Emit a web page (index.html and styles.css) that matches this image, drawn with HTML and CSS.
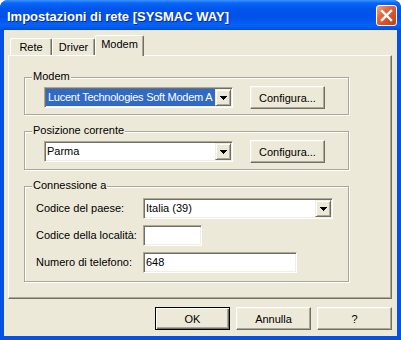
FILE: index.html
```html
<!DOCTYPE html>
<html lang="it">

<head>
  <meta charset="UTF-8">
  <meta name="viewport" content="width=device-width, initial-scale=1.0">
  <title>Impostazioni di rete</title>
  <link rel="stylesheet" href="styles.css">
</head>

<body>
  <div class="window">
    <div class="titlebar">
      <span class="title">Impostazioni di rete [SYSMAC WAY]</span>
      <button type="button" class="close">
        <svg width="19" height="19" viewBox="0 0 19 19">
          <path d="M5 5 L14 14 M14 5 L5 14" stroke="#fff" stroke-width="2.4" stroke-linecap="square" fill="none" />
        </svg>
      </button>
    </div>

    <div class="client">
      <div class="tabs">
        <div class="tab tab-rete">Rete</div>
        <div class="tab tab-driver">Driver</div>
        <div class="tab tab-modem active">Modem</div>
      </div>

      <div class="panel">
        <div class="group group-modem">
          <span class="legend">Modem</span>
          <div class="row">
            <div class="combo combo-wide">
              <span class="value"><span class="sel">Lucent Technologies Soft Modem A</span></span>
              <span class="drop"><svg width="7" height="4" viewBox="0 0 7 4"><path d="M0 0h7v1h-1v1h-1v1h-1v1h-1v-1h-1v-1h-1v-1h-1z" /></svg></span>
            </div>
            <button type="button" class="btn">Configura...</button>
          </div>
        </div>

        <div class="group group-pos">
          <span class="legend">Posizione corrente</span>
          <div class="row">
            <div class="combo combo-wide">
              <span class="value">Parma</span>
              <span class="drop"><svg width="7" height="4" viewBox="0 0 7 4"><path d="M0 0h7v1h-1v1h-1v1h-1v1h-1v-1h-1v-1h-1v-1h-1z" /></svg></span>
            </div>
            <button type="button" class="btn">Configura...</button>
          </div>
        </div>

        <div class="group group-conn">
          <span class="legend">Connessione a</span>
          <div class="form">
            <label>Codice del paese:</label>
            <div class="combo combo-country">
              <span class="value">Italia (39)</span>
              <span class="drop"><svg width="7" height="4" viewBox="0 0 7 4"><path d="M0 0h7v1h-1v1h-1v1h-1v1h-1v-1h-1v-1h-1v-1h-1z" /></svg></span>
            </div>
            <label>Codice della località:</label>
            <div class="edit edit-area"></div>
            <label>Numero di telefono:</label>
            <div class="edit edit-phone">648</div>
          </div>
        </div>
      </div>

      <div class="actions">
        <button type="button" class="btn default">OK</button>
        <button type="button" class="btn">Annulla</button>
        <button type="button" class="btn btn-help">?</button>
      </div>
    </div>
  </div>
</body>

</html>
```

FILE: styles.css
```css
body {
  margin: 0;
  background: #fff;
}

.window {
  width: 401px;
  height: 340px;
  display: flex;
  flex-direction: column;
  background: #0550e6;
  border-radius: 8px 8px 0 0;
  overflow: hidden;
  font-family: "Liberation Sans", Arial, sans-serif;
  font-size: 11px;
  color: #000;
}

.titlebar {
  height: 30px;
  box-sizing: border-box;
  display: flex;
  align-items: center;
  padding: 3px 0 0 7px;
  background: linear-gradient(#3d95ff 0, #0a66f7 3px, #0055ea 9px, #0051ea 18px, #0563f5 25px, #0058ee 28px, #0a45d3 30px);
}

.title {
  flex: 1;
  color: #fff;
  font-size: 13px;
  font-weight: bold;
  line-height: 15px;
  text-shadow: 1px 1px #0b2a9a;
}

.close {
  align-self: flex-start;
  margin: 2px 4px 0 0;
  width: 21px;
  height: 21px;
  padding: 0;
  border: 1px solid #fff;
  border-radius: 3px;
  background: linear-gradient(135deg, #f0a58c 0%, #e2683f 35%, #d24d26 70%, #c2421c 100%);
  display: flex;
  align-items: center;
  justify-content: center;
}

.client {
  flex: 1;
  margin: 0 4px 4px;
  padding-top: 5px;
  background: #ece9d8;
  display: flex;
  flex-direction: column;
}

.tabs {
  height: 20px;
  display: flex;
  align-items: flex-end;
  margin-left: 6px;
}

.tab {
  position: relative;
  height: 17px;
  box-sizing: border-box;
  padding-top: 2px;
  line-height: 13px;
  text-align: center;
  background: #ece9d8;
  border-top: 1px solid #fff;
  border-left: 1px solid #fff;
  border-right: 1px solid #716f64;
  border-radius: 2px 2px 0 0;
  box-shadow: inset -1px 0 #aca899;
}

.tab-rete {
  width: 42px;
}

.tab-driver {
  width: 43px;
}

.tab-modem {
  width: 49px;
}

.tab.active {
  z-index: 1;
  height: 21px;
  margin-bottom: -1px;
}

.panel {
  width: 384px;
  height: 244px;
  box-sizing: border-box;
  margin-left: 4px;
  padding: 21px 0 0 15px;
  border: 1px solid;
  border-color: #fff #716f64 #716f64 #fff;
  box-shadow: inset -1px -1px #aca899;
}

.group {
  position: relative;
  width: 325px;
  box-sizing: border-box;
  border: 1px solid #aca899;
  box-shadow: inset 1px 1px #fff, 1px 1px 0 #fff;
}

.group + .group {
  margin-top: 16px;
}

.group-modem {
  padding: 8px 0 5px 19px;
}

.group-pos {
  padding: 8px 0 6px 19px;
}

.group-conn {
  padding: 11px 0 8px 11px;
}

.legend {
  position: absolute;
  top: -8px;
  left: 7px;
  padding: 0 1px;
  line-height: 13px;
  background: #ece9d8;
}

.row {
  height: 23px;
  display: flex;
  align-items: center;
  gap: 17px;
}

.combo,
.edit {
  height: 21px;
  box-sizing: border-box;
  padding: 1px;
  background: #fff;
  border: 1px solid;
  border-color: #aca899 #fff #fff #aca899;
  box-shadow: inset 1px 1px #716f64, inset -1px -1px #f1efe2;
}

.combo {
  display: flex;
}

.combo-wide {
  width: 189px;
}

.combo-country {
  width: 190px;
}

.value {
  flex: 1;
  min-width: 0;
  overflow: hidden;
  white-space: nowrap;
  padding-left: 1px;
  line-height: 17px;
}

.sel {
  display: block;
  margin-left: -1px;
  padding-left: 2px;
  letter-spacing: -0.25px;
  background: #316ac5;
  color: #fff;
}

.drop {
  width: 16px;
  box-sizing: border-box;
  display: flex;
  align-items: center;
  justify-content: center;
  padding: 1px 0 0 1px;
  background: #ece9d8;
  border: 1px solid;
  border-color: #f1efe2 #716f64 #716f64 #f1efe2;
  box-shadow: inset 1px 1px #fff, inset -1px -1px #aca899;
}

.drop svg {
  display: block;
  fill: #000;
}

.form {
  display: grid;
  grid-template-columns: 107px auto;
  row-gap: 6px;
  align-items: center;
  justify-items: start;
}

.form label {
  line-height: 13px;
}

.edit {
  padding-left: 2px;
  line-height: 17px;
}

.edit-area {
  width: 59px;
}

.edit-phone {
  width: 154px;
}

.btn {
  width: 75px;
  height: 23px;
  padding: 0;
  font-family: inherit;
  font-size: 11px;
  color: #000;
  background: #ece9d8;
  border: 1px solid;
  border-color: #fff #716f64 #716f64 #fff;
  box-shadow: inset -1px -1px #aca899, inset 1px 1px #f1efe2;
}

.btn.default {
  border-color: #000;
  box-shadow: inset 1px 1px #fff, inset -1px -1px #716f64, inset -2px -2px #aca899;
}

.actions {
  display: flex;
  justify-content: flex-end;
  gap: 6px;
  margin-top: 8px;
  padding-right: 5px;
}
```
